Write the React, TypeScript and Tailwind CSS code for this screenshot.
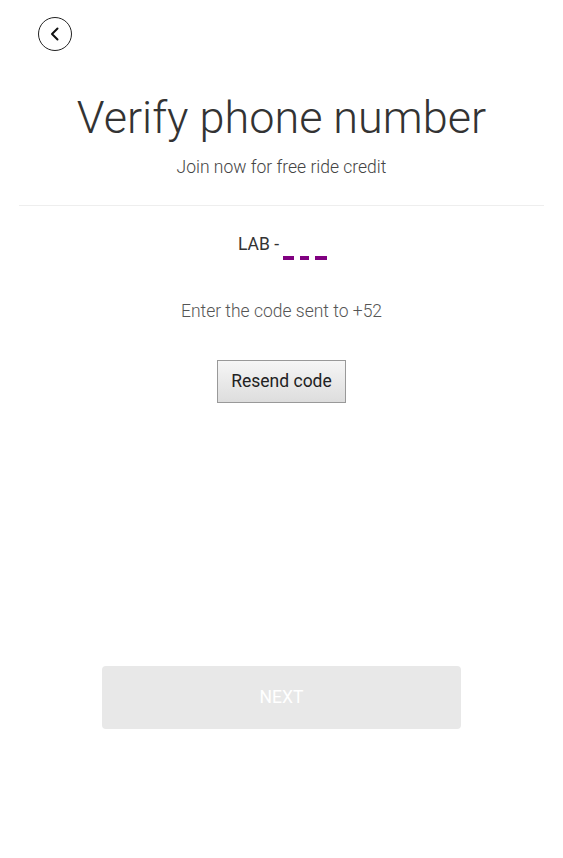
import React from "react";

const App = () => {
  return (
    <div className="min-h-[858px] bg-white font-['Roboto',sans-serif] text-[#333]">
      {/* Back */}
      <div className="px-[38px] pt-[17px]">
        <button className="w-[34px] h-[34px] rounded-full border border-[#222] flex items-center justify-center">
          <svg width="16" height="16" viewBox="0 0 16 16" fill="none">
            <path d="M10.5 2.5 L5 8 L10.5 13.5" stroke="#111" strokeWidth="2" strokeLinecap="round" strokeLinejoin="round" />
          </svg>
        </button>
      </div>

      {/* Header */}
      <div className="text-center mt-[41px]">
        <h1 className="text-[45px] leading-[52px] font-light text-[#333]">Verify phone number</h1>
        <p className="mt-[13px] text-[17.5px] leading-[21px] font-light text-[#444]">Join now for free ride credit</p>
      </div>

      <div className="mx-[19px] mt-[27px] border-t border-[#eeeeee]" />

      {/* Code */}
      <div className="flex justify-center mt-[28px] pl-[2px]">
        <span className="text-[17.5px] leading-[21px] text-[#333]">LAB -</span>
        <div className="flex gap-[6px] items-end ml-[4px] h-[20px] mt-[6px]">
          <span className="block w-[11px] h-[4px] bg-[#800080]" />
          <span className="block w-[9px] h-[4px] bg-[#800080]" />
          <span className="block w-[12px] h-[4px] bg-[#800080]" />
        </div>
      </div>

      <p className="text-center mt-[41px] text-[17.5px] leading-[21px] font-light text-[#555]">Enter the code sent to +52</p>

      <div className="flex justify-center mt-[38px]">
        <button className="w-[129px] h-[43px] border border-[#999] bg-gradient-to-b from-[#f6f6f6] to-[#dddddd] text-[17.5px] text-[#222]">
          Resend code
        </button>
      </div>

      <div className="flex justify-center mt-[263px]">
        <button className="w-[359px] h-[63px] rounded-[4px] bg-[#e8e8e8] text-white text-[17.5px]">NEXT</button>
      </div>
    </div>
  );
};

export default App;
